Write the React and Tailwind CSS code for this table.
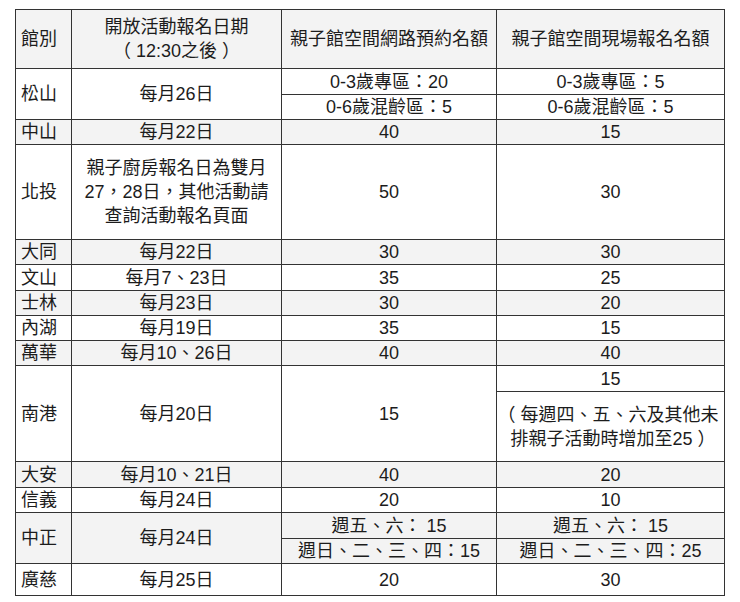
import React from "react";

const B = "border border-[#333]";
const cellC = `${B} text-center align-middle px-[2px] py-0`;
const cellL = `${B} text-left align-middle pl-[5px] pr-0 py-0`;

const Open = () => (
  <span className="inline-block w-[1em]">
    <span className="relative left-[-5px]">（</span>
  </span>
);
const Close = () => (
  <span className="inline-block w-[1em]">
    <span className="relative left-[5px]">）</span>
  </span>
);

export default function App() {
  return (
    <div
      className="min-h-[602px] w-[740px] bg-white pt-[9px] pl-[15px] text-[18px] leading-[24px] text-[#1c1c1c] [text-spacing-trim:space-all]"
      style={{ fontFamily: '"Liberation Sans", "Noto Sans CJK TC", sans-serif' }}
    >
      <table className="table-fixed border-collapse w-[709px]">
        <colgroup>
          <col className="w-[56px]" />
          <col className="w-[210px]" />
          <col className="w-[215px]" />
          <col className="w-[228px]" />
        </colgroup>
        <tbody>
          <tr className="h-[59px] bg-[#f3f3f3]">
            <td className={cellL}>館別</td>
            <td className={cellC}>
              開放活動報名日期
              <br />
              <Open />12:30之後<Close />
            </td>
            <td className={cellC}>親子館空間網路預約名額</td>
            <td className={cellC}>親子館空間現場報名名額</td>
          </tr>

          <tr className="h-[26px] bg-white">
            <td className={cellL} rowSpan={2}>松山</td>
            <td className={cellC} rowSpan={2}>每月26日</td>
            <td className={cellC}>0-3歲專區：20</td>
            <td className={cellC}>0-3歲專區：5</td>
          </tr>
          <tr className="h-[25px] bg-white">
            <td className={cellC}>0-6歲混齡區：5</td>
            <td className={cellC}>0-6歲混齡區：5</td>
          </tr>

          <tr className="h-[25px] bg-[#f3f3f3]">
            <td className={cellL}>中山</td>
            <td className={cellC}>每月22日</td>
            <td className={cellC}>40</td>
            <td className={cellC}>15</td>
          </tr>

          <tr className="h-[95px] bg-white">
            <td className={cellL}>北投</td>
            <td className={cellC}>
              親子廚房報名日為雙月
              <br />
              27，28日，其他活動請
              <br />
              查詢活動報名頁面
            </td>
            <td className={cellC}>50</td>
            <td className={cellC}>30</td>
          </tr>

          <tr className="h-[24px] bg-[#f3f3f3]">
            <td className={cellL}>大同</td>
            <td className={cellC}>每月22日</td>
            <td className={cellC}>30</td>
            <td className={cellC}>30</td>
          </tr>
          <tr className="h-[26px] bg-white">
            <td className={cellL}>文山</td>
            <td className={cellC}>每月7、23日</td>
            <td className={cellC}>35</td>
            <td className={cellC}>25</td>
          </tr>
          <tr className="h-[25px] bg-[#f3f3f3]">
            <td className={cellL}>士林</td>
            <td className={cellC}>每月23日</td>
            <td className={cellC}>30</td>
            <td className={cellC}>20</td>
          </tr>
          <tr className="h-[25px] bg-white">
            <td className={cellL}>內湖</td>
            <td className={cellC}>每月19日</td>
            <td className={cellC}>35</td>
            <td className={cellC}>15</td>
          </tr>
          <tr className="h-[25px] bg-[#f3f3f3]">
            <td className={cellL}>萬華</td>
            <td className={cellC}>每月10、26日</td>
            <td className={cellC}>40</td>
            <td className={cellC}>40</td>
          </tr>

          <tr className="h-[26px] bg-white">
            <td className={cellL} rowSpan={2}>南港</td>
            <td className={cellC} rowSpan={2}>每月20日</td>
            <td className={cellC} rowSpan={2}>15</td>
            <td className={cellC}>15</td>
          </tr>
          <tr className="h-[70px] bg-white">
            <td className={cellC}>
              <Open />每週四、五、六及其他未
              <br />
              排親子活動時增加至25<Close />
            </td>
          </tr>

          <tr className="h-[26px] bg-[#f3f3f3]">
            <td className={cellL}>大安</td>
            <td className={cellC}>每月10、21日</td>
            <td className={cellC}>40</td>
            <td className={cellC}>20</td>
          </tr>
          <tr className="h-[25px] bg-white">
            <td className={cellL}>信義</td>
            <td className={cellC}>每月24日</td>
            <td className={cellC}>20</td>
            <td className={cellC}>10</td>
          </tr>

          <tr className="h-[26px] bg-[#f3f3f3]">
            <td className={cellL} rowSpan={2}>中正</td>
            <td className={cellC} rowSpan={2}>每月24日</td>
            <td className={cellC}>週五、六： 15</td>
            <td className={cellC}>週五、六： 15</td>
          </tr>
          <tr className="h-[25px] bg-[#f3f3f3]">
            <td className={cellC}>週日、二、三、四：15</td>
            <td className={cellC}>週日、二、三、四：25</td>
          </tr>

          <tr className="h-[32px] bg-white">
            <td className={cellL}>廣慈</td>
            <td className={cellC}>每月25日</td>
            <td className={cellC}>20</td>
            <td className={cellC}>30</td>
          </tr>
        </tbody>
      </table>
    </div>
  );
}
